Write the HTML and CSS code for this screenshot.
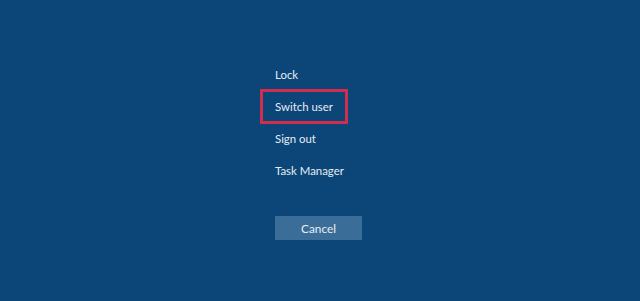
FILE: index.html
```html
<!DOCTYPE html>
<html lang="en">
<head>
<meta charset="UTF-8">
<title>Options</title>
<link rel="stylesheet" href="styles.css">
</head>
<body>

<div class="screen">
    <div class="menu">
        <div class="item">Lock</div>
        <div class="item marked">Switch user</div>
        <div class="item">Sign out</div>
        <div class="item">Task Manager</div>
        <button class="cancel">Cancel</button>
    </div>
</div>

</body>
</html>
```

FILE: styles.css
```css
body {
    margin: 0;
    background: #0c4577;
    font-family: 'Lato', 'Open Sans', sans-serif;
    height: 301px;
    overflow: hidden;
}

.screen {
    display: flex;
    padding: 59px 0 0 275px;
}

.menu {
    display: flex;
    flex-direction: column;
    align-items: flex-start;
}

.item {
    height: 32px;
    line-height: 32px;
    font-size: 11.4px;
    color: #e4edf5;
    position: relative;
}

/* red box round the chosen entry */
.marked::before {
    content: '';
    position: absolute;
    left: -15px;
    top: -2px;
    width: 82px;
    height: 29px;
    border: 3px solid #cf2e4c;
}

.cancel {
    margin-top: 29px;
    width: 87px;
    height: 24px;
    border: 0;
    background: #3b6d99;
    color: #e8eef5;
    font-family: inherit;
    font-size: 11.8px;
    padding: 0;
}
```
